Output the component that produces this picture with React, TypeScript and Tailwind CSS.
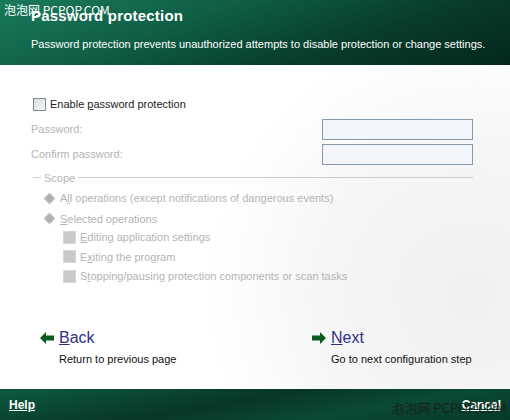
import React from "react";

/* Kaspersky-style setup wizard page: password protection */

const font = { fontFamily: '"Liberation Sans", Tahoma, sans-serif' };

function Arrow({ dir }: { dir: "left" | "right" }) {
  return (
    <svg width="14" height="12" viewBox="0 0 14 12" className="shrink-0">
      <path
        d={dir === "left" ? "M0 6 L6 0 L6 3.5 L14 3.5 L14 8.5 L6 8.5 L6 12 Z" : "M14 6 L8 0 L8 3.5 L0 3.5 L0 8.5 L8 8.5 L8 12 Z"}
        fill="#0b5a1e"
      />
    </svg>
  );
}

function GrayBox() {
  return <span className="inline-block w-[13px] h-[13px] bg-[#c9c9c9] border border-[#d8d8d8] shrink-0" />;
}

function GrayRadio() {
  return (
    <svg width="13" height="13" viewBox="0 0 13 13" className="shrink-0">
      <path d="M6.5 0.5 L12.5 6.5 L6.5 12.5 L0.5 6.5 Z" fill="#c4c4c4" />
      <circle cx="6.5" cy="6.5" r="3.5" fill="#b0b0b0" />
    </svg>
  );
}

export default function App() {
  return (
    <div className="relative w-[510px] h-[420px] flex flex-col overflow-hidden bg-white" style={font}>
      {/* header */}
      <div className="h-[65px] shrink-0 bg-[linear-gradient(160deg,#1a7a5c_0%,#0f5e45_35%,#073a29_70%,#04281c_100%)] pl-[31px] pt-[6px] text-white">
        <div className="text-[15px] font-bold leading-[20px] tracking-[0.2px]">Password protection</div>
        <div className="text-[11px] leading-[14px] mt-[11px]">
          Password protection prevents unauthorized attempts to disable protection or change settings.
        </div>
      </div>

      {/* body */}
      <div className="flex-1 min-h-0 relative bg-[radial-gradient(circle_at_470px_230px,#f0f0f0_0px,#f6f6f6_150px,#ffffff_260px)] text-[11px]">
        <div className="flex flex-col pl-[31px] pr-[37px] pt-[31px]">
          <label className="flex items-center gap-[4px] text-[#222] ml-[2px]">
            <span className="inline-block w-[13px] h-[13px] border border-[#7a8a9a] bg-[linear-gradient(135deg,#d8dde2,#f7f7f7)]" />
            <span>
              Enable <span className="underline">p</span>assword protection
            </span>
          </label>

          <div className="flex items-center justify-between mt-[6px] text-[#b4b4b4]">
            <span>Password:</span>
            <span className="w-[151px] h-[21px] border border-[#8899aa] bg-[#f2f6fb]" />
          </div>
          <div className="flex items-center justify-between mt-[4px] text-[#b4b4b4]">
            <span>Confirm password:</span>
            <span className="w-[151px] h-[21px] border border-[#8899aa] bg-[#f2f6fb]" />
          </div>

          <div className="flex items-center mt-[5px] text-[#b4b4b4] gap-[3px]">
            <span className="w-[8px] h-px bg-[#c8cccc] ml-[2px]" />
            <span>Scope</span>
            <span className="flex-1 h-px bg-[#c8cccc]" />
          </div>

          <div className="flex flex-col text-[#b4b4b4] ml-[12px] mt-[4px] gap-[4px]">
            <div className="flex items-center gap-[4px]">
              <GrayRadio />
              <span>
                A<span className="underline">l</span>l operations (except notifications of dangerous events)
              </span>
            </div>
            <div className="flex items-center gap-[4px]">
              <GrayRadio />
              <span>
                <span className="underline">S</span>elected operations
              </span>
            </div>
            <div className="flex flex-col ml-[20px] gap-[3px] mt-[-2px]">
              <div className="flex items-center gap-[4px]">
                <GrayBox />
                <span>
                  <span className="underline">E</span>diting application settings
                </span>
              </div>
              <div className="flex items-center gap-[4px]">
                <GrayBox />
                <span>
                  E<span className="underline">x</span>iting the program
                </span>
              </div>
              <div className="flex items-center gap-[4px]">
                <GrayBox />
                <span>
                  S<span className="underline">t</span>opping/pausing protection components or scan tasks
                </span>
              </div>
            </div>
          </div>

          <div className="flex mt-[43px]">
            <div className="w-[272px] pl-[9px]">
              <div className="flex items-center gap-[5px]">
                <Arrow dir="left" />
                <span className="text-[16px] leading-[20px] text-[#30308a]">
                  <span className="underline">B</span>ack
                </span>
              </div>
              <div className="text-[#111] ml-[19px] mt-[3px]">Return to previous page</div>
            </div>
            <div className="pl-[9px]">
              <div className="flex items-center gap-[5px]">
                <Arrow dir="right" />
                <span className="text-[16px] leading-[20px] text-[#30308a]">
                  <span className="underline">N</span>ext
                </span>
              </div>
              <div className="text-[#111] ml-[19px] mt-[3px]">Go to next configuration step</div>
            </div>
          </div>
        </div>
      </div>

      {/* footer */}
      <div className="h-[31px] shrink-0 flex items-center justify-between px-[9px] bg-[linear-gradient(170deg,#0d5a40_0%,#073726_45%,#0a4a33_70%,#06392a_100%)] text-white text-[12px] font-bold">
        <span className="underline">Help</span>
        <span className="underline">Cancel</span>
      </div>

      {/* watermarks */}
      <div className="absolute left-[4px] top-[4px] text-[12px] text-white leading-none" style={{ fontFamily: '"Noto Sans CJK SC", sans-serif' }}>
        泡泡网 PCPOP.COM
      </div>
      <div className="absolute right-[4px] bottom-[6px] text-[13px] text-[#1a1a1a] leading-none opacity-80" style={{ fontFamily: '"Noto Sans CJK SC", sans-serif' }}>
        泡泡网 PCPOP.COM
      </div>
    </div>
  );
}
